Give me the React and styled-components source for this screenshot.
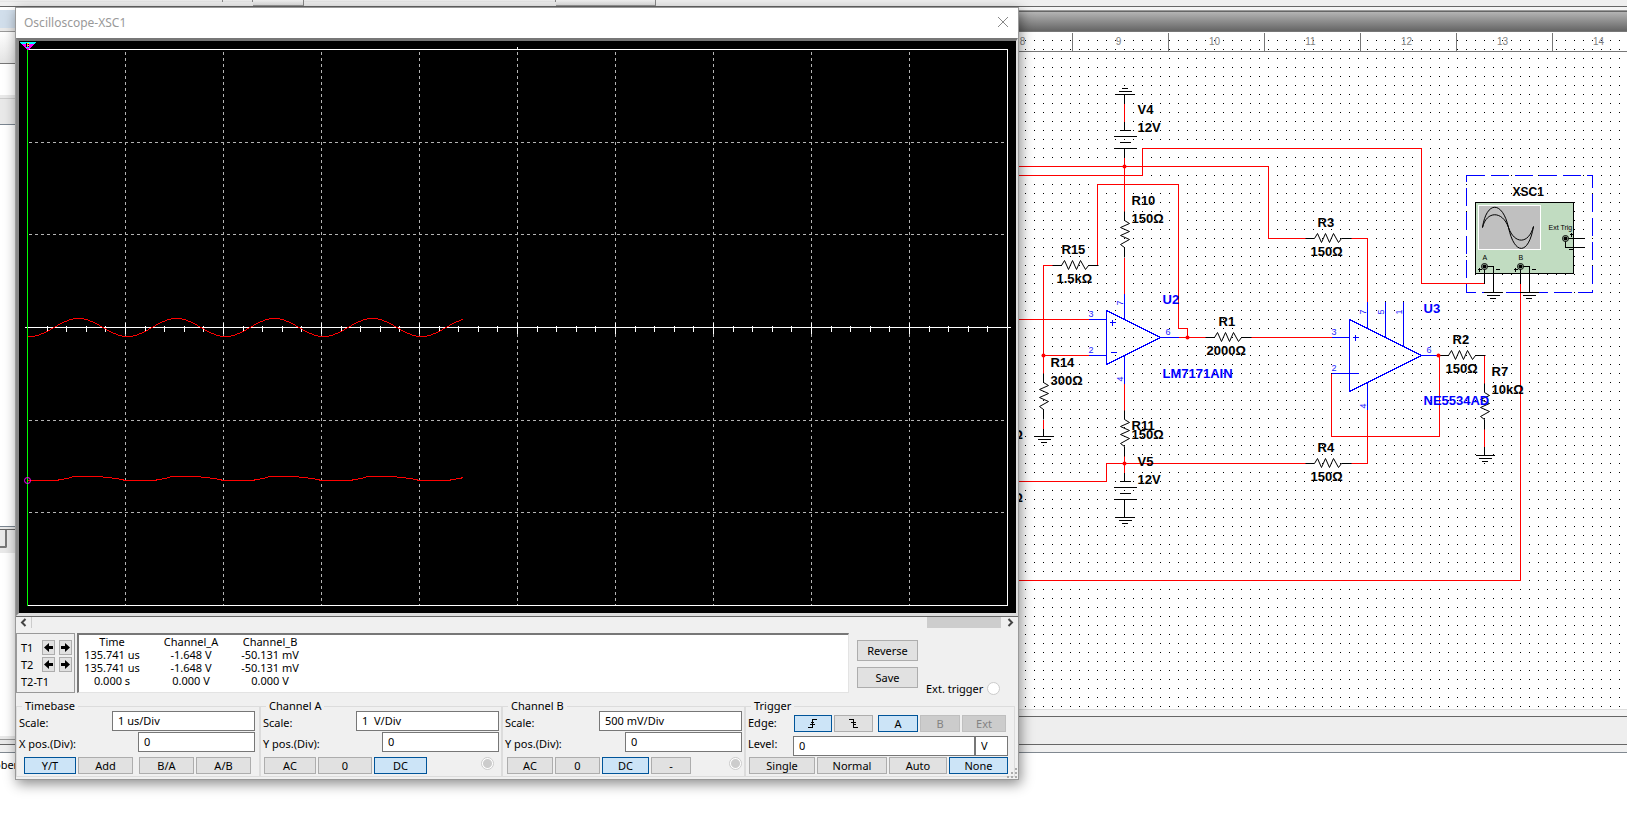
import React from 'react';
import styled, { createGlobalStyle, css } from 'styled-components';

const GlobalStyle = createGlobalStyle`
  * { box-sizing: border-box; }
  body {
    margin: 0;
    background: #fff;
    color: #000;
    font-family: "Noto Sans", "Open Sans", sans-serif;
    font-size: 11px;
    overflow: hidden;
  }
  button, input { font: inherit; color: inherit; margin: 0; }
`;

/* ---------- desktop behind the instrument ---------- */

const Desktop = styled.div`
  position: relative;
  min-height: 100vh;
  display: flex;
  flex-direction: column;
`;

const ToolStrip = styled.div`
  display: flex;
  height: 7px;
  background: #efefef;
  border-bottom: 1px solid #666;
`;

const ToolTab = styled.div`
  width: ${(p) => p.$w}px;
  height: ${(p) => p.$h}px;
  border-right: 1px solid #888;
  border-bottom: ${(p) => (p.$line ? '1px solid #999' : 'none')};
  background: linear-gradient(#f1f1f1, #e2e2e2);
`;

const Workspace = styled.div`
  display: flex;
`;

const SidePanel = styled.aside`
  width: 16px;
  display: flex;
  flex-direction: column;
`;

const SideSlot = styled.div`
  height: ${(p) => p.$h}px;
  background: ${(p) => p.$bg || '#e9e9e9'};
  border-bottom: ${(p) => (p.$line ? `1px solid ${p.$line}` : 'none')};
`;

const SideTab = styled.div`
  width: 7px;
  height: 18px;
  border: solid #777;
  border-width: 0 2px 2px 0;
  border-radius: 0 0 2px 0;
`;

const Design = styled.main`
  flex: 1;
  min-width: 0;
`;

const CaptionBar = styled.div`
  height: 25px;
  border-top: 3px solid #f4f4f4;
  border-bottom: 1px solid #777;
  background: linear-gradient(#999 0 1px, #666 1px 2px, #b4b4b4 2px, #656565);
`;

const Sheet = styled.svg`
  display: block;
  width: 100%;
  height: 677px;
  font-family: "Liberation Sans", Arial, sans-serif;
`;

const StatusTrack = styled.div`
  height: 36px;
  border-top: 1px solid #ddd;
  border-bottom: 1px solid #666;
  background: linear-gradient(#f3f3f3 0 6px, #666 6px 7px, #eee 7px);
`;

const SpreadsheetDock = styled.div`
  border-top: 7px solid #f0f0f0;
`;

const DockHeader = styled.div`
  border-top: 1px solid #808890;
  padding: 4px 0;
  line-height: 16px;
  text-indent: -6px;
`;

/* ---------- schematic parts ---------- */

const Wire = styled.path`
  fill: none;
  stroke: ${(p) => p.$color || '#f00'};
  shape-rendering: crispEdges;
`;

const Label = styled.text`
  font-size: ${(p) => p.$size || 13}px;
  font-weight: bold;
  fill: ${(p) => p.$color || '#000'};
`;

const PinNumber = styled.text`
  font-size: 9px;
  fill: #22f;
`;

const RulerNumber = styled.text`
  font-size: 10px;
  fill: #808080;
  text-anchor: middle;
`;

const Tiny = styled.text`
  font-size: ${(p) => p.$size || 7}px;
`;

const ZIG = 'l5 3 l-9 4 l9 4 l-9 4 l9 4 l-9 5 l4 3';

const Resistor = ({ x, y, flat }) => (
  <g transform={`translate(${x} ${y})${flat ? ' rotate(-90)' : ''}`}>
    <path d={`M0 0 v9 ${ZIG} v10`} fill="none" stroke="#000" />
  </g>
);

const Ground = ({ x, y, up }) => {
  const s = up ? -3 : 3;
  return <Wire $color="#000" d={`M${x - 9} ${y} h19 M${x - 6} ${y + s} h13 M${x - 3} ${y + 2 * s} h6`} />;
};

const Battery = ({ x, y }) => (
  <Wire $color="#000" d={`M${x} ${y - 9} v9 M${x - 5} ${y} h11 M${x - 11} ${y + 6} h23 M${x - 5} ${y + 12} h11 M${x - 11} ${y + 18} h23 M${x} ${y + 18} v9`} />
);

const Jack = ({ x, y }) => (
  <g>
    <circle cx={x} cy={y} r="3" fill="#c1dcc1" stroke="#000" />
    <circle cx={x} cy={y} r="2" fill="#000" />
  </g>
);

const BLUE = '#00f';

const LABELS = [
  [1137, 113, 'V4'], [1137, 131, '12V'], [1131, 204, 'R10'], [1131, 222, '150Ω'],
  [1061, 253, 'R15'], [1056, 282, '1.5kΩ'], [1218, 325, 'R1'], [1206, 354, '2000Ω'],
  [1050, 366, 'R14'], [1050, 384, '300Ω'], [1131, 429, 'R11'], [1131, 438, '150Ω'],
  [1137, 465, 'V5'], [1137, 483, '12V'], [1317, 226, 'R3'], [1310, 255, '150Ω'],
  [1317, 451, 'R4'], [1310, 480, '150Ω'], [1452, 343, 'R2'], [1445, 372, '150Ω'],
  [1491, 375, 'R7'], [1491, 393, '10kΩ'], [1012, 438, 'Ω'], [1012, 501, 'Ω'],
  [1162, 303, 'U2', BLUE], [1162, 377, 'LM7171AIN', BLUE],
  [1423, 312, 'U3', BLUE], [1423, 404, 'NE5534AD', BLUE],
];

const PINS = [
  [1088, 316, '3'], [1088, 352, '2'], [1165, 334, '6'], [1331, 334, '3'], [1331, 370, '2'], [1426, 352, '6'],
  [1122, 305, '7', 1], [1122, 381, '4', 1], [1365, 314, '7', 1], [1383, 314, '5', 1], [1401, 314, '1', 1], [1365, 408, '4', 1],
];

const JUNCTIONS = [[1124, 166], [1043, 355], [1187, 337], [1124, 463], [1438, 355]];

const Schematic = () => (
  <Sheet role="img" aria-label="Circuit schematic">
    <defs>
      <pattern id="dots" x="1025" y="40" width="9" height="9" patternUnits="userSpaceOnUse">
        <rect width="1" height="1" fill="#000" shapeRendering="crispEdges" />
      </pattern>
    </defs>
    <g transform="translate(-16 -32)">
      <rect x="16" y="32" width="100%" height="677" fill="url(#dots)" />
    </g>
    <g transform="translate(-15.5 -31.5)">
      <Wire $color="#777" d="M16 51 H4000 M1072 32 V51 M1168 32 V51 M1264 32 V51 M1360 32 V51 M1456 32 V51 M1552 32 V51" />
      {[8, 9, 10, 11, 12, 13, 14].map((n) => (
        <RulerNumber key={n} x={1022 + (n - 8) * 96} y="44">{n}</RulerNumber>
      ))}

      <Wire d="M1000 166 H1268 V238 H1305 M1000 175 H1142 V148 H1421 V283 H1484" />
      <Wire d="M1124 103 V121 M1124 157 V211 M1124 257 V293 M1124 383 V410 M1124 455 V473" />
      <Wire d="M1097 265 V184 H1178 V328 H1187 V337 M1053 265 H1043 V373 M1043 419 V428" />
      <Wire d="M1000 319 H1088 M1043 355 H1088 M1178 337 H1205 M1250 337 H1331" />
      <Wire d="M1350 238 H1367 V301 M1367 409 V463 H1350 M1331 373 V436 H1439 V355" />
      <Wire d="M1484 355 V383 M1484 428 V446 M1000 481 H1106 V463 H1305 M1000 580 H1520 V283" />

      <Wire $color="#000" d="M1124 94 V103 M1124 508 V517 M1043 428 V436 M1484 446 V455" />
      <Ground x={1124} y={94} up />
      <Ground x={1124} y={517} />
      <Ground x={1043} y={436} />
      <Ground x={1484} y={455} />
      <Battery x={1124} y={130} />
      <Battery x={1124} y={481} />

      <Resistor x={1124} y={211} />
      <Resistor x={1124} y={410} />
      <Resistor x={1043} y={373} />
      <Resistor x={1484} y={383} />
      <Resistor x={1052} y={265} flat />
      <Resistor x={1205} y={337} flat />
      <Resistor x={1305} y={238} flat />
      <Resistor x={1305} y={463} flat />
      <Resistor x={1439} y={355} flat />

      <Wire $color={BLUE} d="M1106 310 V364 L1160 337 Z M1088 319 H1106 M1088 355 H1106 M1160 337 H1178 M1124 293 V319 M1124 355 V383" />
      <Wire $color={BLUE} d="M1109 322 h6 M1112 319 v6 M1110 352 h6" />
      <Wire $color={BLUE} d="M1349 319 V391 L1421 355 Z M1331 337 H1349 M1331 373 H1358 M1421 355 H1438" />
      <Wire $color={BLUE} d="M1367 301 V328 M1385 301 V337 M1403 301 V346 M1367 382 V409 M1352 337 h6 M1355 334 v6" />

      {JUNCTIONS.map(([x, y]) => <circle key={`${x}-${y}`} cx={x} cy={y} r="2" fill="#f00" />)}
      {LABELS.map(([x, y, t, c]) => <Label key={`${x}-${y}`} x={x} y={y} $color={c}>{t}</Label>)}
      {PINS.map(([x, y, t, turned]) => (
        <PinNumber key={`${x}-${y}`} transform={`translate(${x} ${y})${turned ? ' rotate(-90)' : ''}`}>{t}</PinNumber>
      ))}

      <rect x="1466" y="175" width="126" height="117" fill="none" stroke="#00f" strokeDasharray="18 6" shapeRendering="crispEdges" />
      <Label x="1512" y="195" $size={12}>XSC1</Label>
      <rect x="1475" y="202" width="98" height="71" fill="#c1dcc1" stroke="#000" />
      <rect x="1478" y="205" width="62" height="44" fill="#c0c0c0" stroke="#fff" />
      <path d="M1482 227 C1486 200 1502 200 1508 227 C1514 255 1528 255 1533 226" fill="none" stroke="#000" />
      <path d="M1482 227 C1486 210 1502 210 1508 227 C1514 244 1528 244 1533 226" fill="none" stroke="#000" />
      <Wire $color="#000" d="M1565 238 V247 H1584 M1565 238 H1584 M1484 266 V283 M1484 266 H1493 V292 M1520 266 V283 M1520 266 H1529 V292" />
      <Wire $color="#000" d="M1477 269 h4 M1479 267 v4 M1495 269 h4 M1513 269 h4 M1515 267 v4 M1531 269 h4 M1569 234 h4 M1571 232 v4 M1568 249 h4" />
      <Ground x={1492} y={292} />
      <Ground x={1528} y={292} />
      <Jack x={1484} y={266} />
      <Jack x={1520} y={266} />
      <Jack x={1565} y={238} />
      <Tiny x="1548" y="229">Ext Trig</Tiny>
      <Tiny x="1482" y="259">A</Tiny>
      <Tiny x="1518" y="259">B</Tiny>
    </g>
  </Sheet>
);

/* ---------- oscilloscope window ---------- */

const ScopeWindow = styled.section`
  position: absolute;
  left: 15px;
  top: 7px;
  width: 1004px;
  background: #f0f0f0;
  border: 1px solid #999;
  box-shadow: 2px 4px 12px rgba(0, 0, 0, 0.45);
`;

const TitleBar = styled.header`
  display: flex;
  align-items: center;
  justify-content: space-between;
  height: 30px;
  padding: 0 9px 2px 8px;
  background: #fff;
  color: #999;
`;

const Title = styled.h1`
  margin: 0;
  font-size: 12px;
  font-weight: normal;
`;

const CloseButton = styled.button`
  display: flex;
  padding: 0;
  border: 0;
  background: none;
`;

const ScreenFrame = styled.div`
  border: solid;
  border-width: 3px 2px 3px 3px;
  border-color: #777 #ddd #ddd #888;
  background: #000;
`;

const Screen = styled.svg`
  display: block;
  width: 100%;
  height: 572px;
`;

const ScrollBar = styled.div`
  display: flex;
  align-items: center;
  height: 17px;
  padding: 0 2px 5px;
  border-top: 1px solid #666;
`;

const ScrollArrow = styled.button`
  display: flex;
  justify-content: center;
  width: 11px;
  padding: 0;
  border: 0;
  background: none;
`;

const ScrollTrack = styled.div`
  flex: 1;
  display: flex;
  justify-content: flex-end;
  height: 11px;
  margin-left: 2px;
  padding-right: 4px;
  border-left: 1px solid #ccc;
`;

const ScrollThumb = styled.div`
  width: 74px;
  background: #cdcdcd;
`;

const ReadoutRow = styled.div`
  display: flex;
  height: 60px;
`;

const CursorBox = styled.div`
  display: flex;
  flex-direction: column;
  width: 59px;
  padding: 5px 2px 0 4px;
  border: 1px solid #999;
`;

const CursorLine = styled.div`
  display: flex;
  align-items: center;
  height: 17px;
  gap: 4px;
  line-height: 15px;
`;

const CursorName = styled.span`
  flex: 1;
  white-space: nowrap;
`;

const ArrowButton = styled.button`
  display: flex;
  align-items: center;
  justify-content: center;
  width: 13px;
  height: 15px;
  padding: 0;
  background: #e1e1e1;
  border: 1px solid #adadad;
`;

const ReadoutBox = styled.div`
  flex: 1;
  margin-left: 2px;
  background: #fff;
  border: 1px solid #e3e3e3;
  border-top: 2px solid #777;
  border-left: 2px solid #777;
`;

const ReadoutTable = styled.table`
  border-collapse: collapse;
  text-align: center;
  line-height: 13px;
  th, td { padding: 0; font-weight: normal; width: 66px; }
  th:nth-child(2) { width: 92px; }
`;

const ReadoutActions = styled.div`
  display: flex;
  flex-direction: column;
  gap: 6px;
  padding: 7px 8px 0;
`;

const ExtTrigger = styled.label`
  display: flex;
  align-items: center;
  align-self: flex-end;
  gap: 4px;
  width: 92px;
  height: 14px;
  margin-bottom: -2px;
`;

const Button = styled.button`
  display: flex;
  align-items: center;
  justify-content: center;
  width: ${(p) => p.$w}px;
  height: ${(p) => p.$h || 17}px;
  padding: 0;
  background: #e1e1e1;
  border: 1px solid #adadad;
  ${(p) => p.$on && css`
    background: #cce4f7;
    border-color: #005499;
  `}
  &:disabled {
    background: #ccc;
    border-color: #bfbfbf;
    color: #838383;
  }
`;

const Radio = styled.input.attrs({ type: 'radio' })`
  appearance: none;
  width: 13px;
  height: 13px;
  border: 1px solid #ccc;
  border-radius: 50%;
  background: #fff;
  &:checked {
    background: radial-gradient(circle, #ccc 0 4px, #fff 5px);
  }
`;

const Groups = styled.div`
  display: grid;
  grid-template-columns: 244fr 242fr 243fr 270fr;
  margin: 6px 3px 2px 0;
`;

const Group = styled.fieldset`
  min-width: 0;
  margin: 0;
  padding: 0 ${(p) => p.$end || 4}px 2px 2px;
  border: 1px solid #dcdcdc;
`;

const GroupName = styled.legend`
  margin: 0 0 -2px 3px;
  padding: 0 3px;
  line-height: 14px;
`;

const FieldRow = styled.div`
  display: flex;
  align-items: center;
  justify-content: space-between;
  height: 19px;
  margin-bottom: 2px;
`;

const FieldName = styled.label`
  padding-top: 4px;
  line-height: 15px;
`;

const Field = styled.input`
  width: ${(p) => p.$w}px;
  height: 20px;
  padding: 0 5px 1px;
  background: #fff;
  border: 1px solid #777;
  border-radius: 0;
  outline: none;
`;

const ButtonRow = styled.div`
  display: flex;
  align-items: center;
  gap: 2px;
  margin-top: 6px;
  padding: 0 ${(p) => p.$end || 0}px 0 ${(p) => p.$indent || 0}px;
  ${Radio} { margin: 0 0 4px auto; }
`;

const Gap = styled.span`
  width: ${(p) => p.$w}px;
`;

const EdgeButtons = styled.div`
  display: flex;
  gap: 2px;
  padding: 6px 4px 0 0;
`;

const LevelFields = styled.div`
  display: flex;
  padding: 8px 2px 0 0;
`;

const Grip = styled.svg`
  position: absolute;
  right: 0;
  bottom: 0;
`;

const COLUMNS = [125, 223, 321, 419, 517, 615, 713, 811, 909];
const ROWS = [142, 234, 420, 512];

const channelA = Array.from({ length: 436 }, (_, i) => {
  const x = 27 + i;
  return `${x},${Math.round(327 + 9 * Math.cos((2 * Math.PI * (x - 29)) / 98))}`;
}).join(' ');

// one period of channel B as offset/level steps
const STEPS = [[0, 480], [28, 480], [34, 479], [40, 478], [46, 476], [71, 476], [80, 477], [89, 478], [94, 479]];
const channelB = [0, 1, 2, 3, 4]
  .flatMap((n) => STEPS.map(([dx, y]) => [27 + n * 98 + dx, y]))
  .filter(([x]) => x < 462)
  .concat([[463, 477]])
  .map((pt) => pt.join(','))
  .join(' ');

const ticks = Array.from({ length: 49 }, (_, i) => {
  const x = Math.round(27 + (i + 1) * 19.6);
  return (i + 1) % 5 === 0 ? `M${x} 322 V333` : `M${x} 325 V331`;
}).join(' ');

const ScopeScreen = () => (
  <Screen role="img" aria-label="Oscilloscope traces">
    <g transform="translate(-18.5 -40.5)" fill="none" shapeRendering="crispEdges">
      <path d={COLUMNS.map((x) => `M${x} 51 V605`).join(' ')} stroke="#b4b4b4" strokeDasharray="3 3" />
      <path d={ROWS.map((y) => `M28 ${y} H1007`).join(' ')} stroke="#b4b4b4" strokeDasharray="3 3" />
      <path d="M27 49 H1007 V605 H27 M24 327 H1010 M517 46 V49" stroke="#fff" />
      <path d={ticks} stroke="#fff" />
      <path d="M27 49 V605" stroke="#0f0" />
      <polyline points={channelA} stroke="#f00" />
      <polyline points={channelB} stroke="#f00" />
      <circle cx="27" cy="480" r="3" stroke="#f0f" shapeRendering="auto" />
      <path d="M18 41 H36 L34 43 H20 Z" fill="#0ff" />
      <path d="M20 43 H34 L28 49 H26 Z" fill="#f0f" />
      <path d="M26 42 v5 M28 43 v4" stroke="#000" />
      <path d="M26 43 h2 M26 45 h2" stroke="#ff0" />
      <path d="M25 47 h3" stroke="#0ff" />
    </g>
  </Screen>
);

const Arrow = ({ back }) => (
  <svg width="9" height="9" viewBox="0 0 9 9">
    <path d={back ? 'M0 4.5 L5 0 V3 H9 V6 H5 V9 Z' : 'M9 4.5 L4 0 V3 H0 V6 H4 V9 Z'} fill="#000" />
  </svg>
);

const Chevron = ({ back }) => (
  <svg width="7" height="9" viewBox="0 0 7 9">
    <path d={back ? 'M5.5 1 L2 4.5 L5.5 8' : 'M1.5 1 L5 4.5 L1.5 8'} fill="none" stroke="#444" strokeWidth="2" />
  </svg>
);

const EdgeIcon = ({ falling }) => (
  <svg width="10" height="9" viewBox="0 0 10 9" fill="none" stroke="#000" shapeRendering="crispEdges">
    <path d={falling ? 'M0 .5 H4.5 V8.5 H9 M2 3.5 H7 M4 5.5 H7' : 'M0 8.5 H4.5 V.5 H9 M2 5.5 H7 M3 3.5 H6'} />
  </svg>
);

const CursorControls = ({ name }) => (
  <CursorLine>
    <CursorName>{name}</CursorName>
    <ArrowButton aria-label={`${name} left`}><Arrow back /></ArrowButton>
    <ArrowButton aria-label={`${name} right`}><Arrow /></ArrowButton>
  </CursorLine>
);

const READINGS = [
  ['135.741 us', '-1.648 V', '-50.131 mV'],
  ['135.741 us', '-1.648 V', '-50.131 mV'],
  ['0.000 s', '0.000 V', '0.000 V'],
];

const ScaleFields = ({ id, axis, scale }) => (
  <>
    <FieldRow>
      <FieldName htmlFor={`${id}-scale`}>Scale:</FieldName>
      <Field id={`${id}-scale`} $w={143} defaultValue={scale} />
    </FieldRow>
    <FieldRow>
      <FieldName htmlFor={`${id}-pos`}>{axis} pos.(Div):</FieldName>
      <Field id={`${id}-pos`} $w={117} defaultValue="0" />
    </FieldRow>
  </>
);

const Oscilloscope = () => (
  <ScopeWindow>
    <TitleBar>
      <Title>Oscilloscope-XSC1</Title>
      <CloseButton aria-label="Close">
        <svg width="12" height="12" viewBox="0 0 12 12" stroke="#888">
          <path d="M1 1 L11 11 M11 1 L1 11" />
        </svg>
      </CloseButton>
    </TitleBar>
    <ScreenFrame><ScopeScreen /></ScreenFrame>
    <ScrollBar>
      <ScrollArrow aria-label="Scroll left"><Chevron back /></ScrollArrow>
      <ScrollTrack><ScrollThumb /></ScrollTrack>
      <ScrollArrow aria-label="Scroll right"><Chevron /></ScrollArrow>
    </ScrollBar>

    <ReadoutRow>
      <CursorBox>
        <CursorControls name="T1" />
        <CursorControls name="T2" />
        <CursorLine><CursorName>T2-T1</CursorName></CursorLine>
      </CursorBox>
      <ReadoutBox>
        <ReadoutTable>
          <thead>
            <tr><th>Time</th><th>Channel_A</th><th>Channel_B</th></tr>
          </thead>
          <tbody>
            {READINGS.map((row, i) => (
              <tr key={i}>{row.map((v, j) => <td key={j}>{v}</td>)}</tr>
            ))}
          </tbody>
        </ReadoutTable>
      </ReadoutBox>
      <ReadoutActions>
        <Button $w={61} $h={21}>Reverse</Button>
        <Button $w={61} $h={21}>Save</Button>
      </ReadoutActions>
      <ExtTrigger>Ext. trigger <Radio name="ext" /></ExtTrigger>
    </ReadoutRow>

    <Groups>
      <Group>
        <GroupName>Timebase</GroupName>
        <ScaleFields id="time" axis="X" scale="1 us/Div" />
        <ButtonRow $indent={5}>
          <Button $w={52} $on>Y/T</Button>
          <Button $w={55}>Add</Button>
          <Gap $w={2} />
          <Button $w={55}>B/A</Button>
          <Button $w={55}>A/B</Button>
        </ButtonRow>
      </Group>
      <Group $end={2}>
        <GroupName>Channel A</GroupName>
        <ScaleFields id="a" axis="Y" scale="1  V/Div" />
        <ButtonRow $indent={1} $end={5}>
          <Button $w={52}>AC</Button>
          <Button $w={54}>0</Button>
          <Button $w={53} $on>DC</Button>
          <Radio name="cha" aria-label="Channel A" defaultChecked />
        </ButtonRow>
      </Group>
      <Group $end={2}>
        <GroupName>Channel B</GroupName>
        <ScaleFields id="b" axis="Y" scale="500 mV/Div" />
        <ButtonRow $indent={2}>
          <Button $w={46}>AC</Button>
          <Button $w={45}>0</Button>
          <Button $w={47} $on>DC</Button>
          <Button $w={40}>-</Button>
          <Radio name="chb" aria-label="Channel B" defaultChecked />
        </ButtonRow>
      </Group>
      <Group>
        <GroupName>Trigger</GroupName>
        <FieldRow>
          <FieldName as="span">Edge:</FieldName>
          <EdgeButtons>
            <Button $w={38} $on aria-label="Rising edge"><EdgeIcon /></Button>
            <Button $w={39} aria-label="Falling edge"><EdgeIcon falling /></Button>
            <Gap $w={1} />
            <Button $w={40} $on>A</Button>
            <Button $w={40} disabled>B</Button>
            <Button $w={44} disabled>Ext</Button>
          </EdgeButtons>
        </FieldRow>
        <FieldRow>
          <FieldName htmlFor="level">Level:</FieldName>
          <LevelFields>
            <Field id="level" $w={182} defaultValue="0" />
            <Field $w={33} aria-label="Level unit" defaultValue="V" />
          </LevelFields>
        </FieldRow>
        <ButtonRow $indent={1}>
          <Button $w={66}>Single</Button>
          <Button $w={70}>Normal</Button>
          <Button $w={58}>Auto</Button>
          <Button $w={59} $on>None</Button>
        </ButtonRow>
      </Group>
    </Groups>
    <Grip width="11" height="11" fill="#aaa">
      <path d="M8 0h2v2h-2z M4 4h2v2h-2z M8 4h2v2h-2z M0 8h2v2h-2z M4 8h2v2h-2z M8 8h2v2h-2z" />
    </Grip>
  </ScopeWindow>
);

export default function App() {
  return (
    <Desktop>
      <GlobalStyle />
      <ToolStrip>
        <ToolTab $w={223} $h={2} />
        <ToolTab $w={30} $h={2} />
        <ToolTab $w={51} $h={6} $line />
        <ToolTab $w={252} $h={2} />
        <ToolTab $w={100} $h={6} $line />
      </ToolStrip>
      <Workspace>
        <SidePanel>
          <SideSlot $h={3} $bg="#fff" />
          <SideSlot $h={18} $bg="#d1deeb" />
          <SideSlot $h={4} $line="#999" />
          <SideSlot $h={32} $bg="linear-gradient(#fff, #e4e4e4)" $line="#777" />
          <SideSlot $h={31} $bg="#fff" />
          <SideSlot $h={4} $line="#ccc" />
          <SideSlot $h={26} $line="#7a8590" />
          <SideSlot $h={402} $bg="#fff" $line="#7a8590" />
          <SideSlot $h={3} $line="#666" />
          <SideSlot $h={23}><SideTab /></SideSlot>
          <SideSlot $h={183} $bg="#fff" />
          <SideSlot $h={4} $line="#999" />
          <SideSlot $h={5} $line="#666" />
        </SidePanel>
        <Design>
          <CaptionBar />
          <Schematic />
          <StatusTrack />
        </Design>
      </Workspace>
      <SpreadsheetDock>
        <DockHeader>ober</DockHeader>
      </SpreadsheetDock>
      <Oscilloscope />
    </Desktop>
  );
}
